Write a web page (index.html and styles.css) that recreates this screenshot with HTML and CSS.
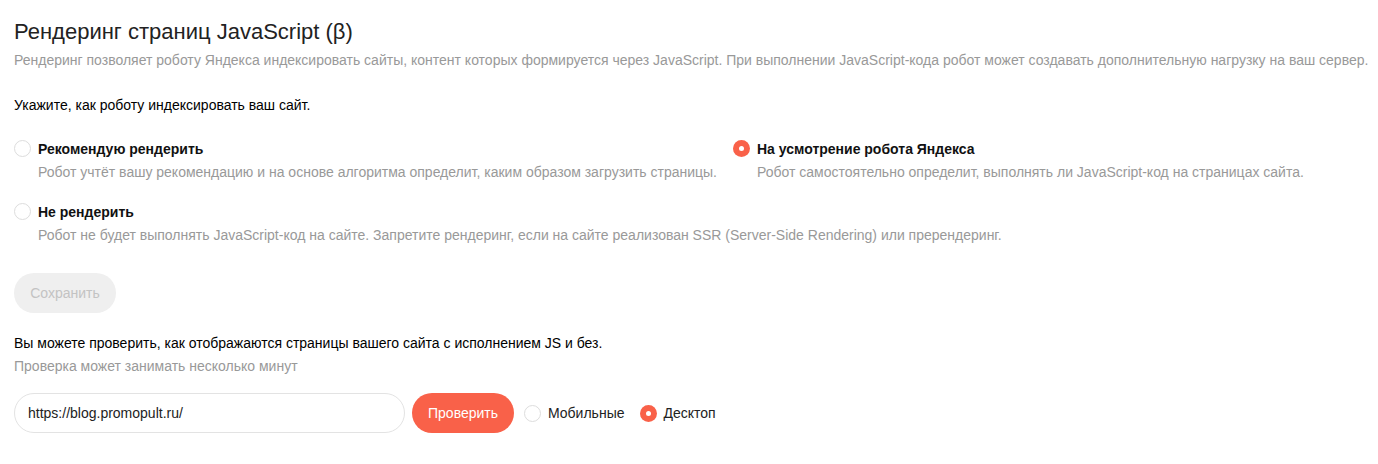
FILE: index.html
```html
<!DOCTYPE html>
<html>
    <head lang="ru">
        <meta charset="UTF-8">
        <title>Рендеринг</title>
        <link rel="stylesheet" href="styles.css">
    </head>
    <body>
    <div class="page">
        <h1 class="title">Рендеринг страниц JavaScript (β)</h1>
        <p class="lead">Рендеринг позволяет роботу Яндекса индексировать сайты, контент которых формируется через JavaScript. При выполнении JavaScript-кода робот может создавать дополнительную нагрузку на ваш сервер.</p>

        <p class="ask">Укажите, как роботу индексировать ваш сайт.</p>

        <div class="options">
            <div class="option">
                <span class="radio"></span>
                <div class="option-text">
                    <div class="option-name">Рекомендую рендерить</div>
                    <div class="option-desc">Робот учтёт вашу рекомендацию и на основе алгоритма определит, каким образом загрузить страницы.</div>
                </div>
            </div>
            <div class="option">
                <span class="radio checked"></span>
                <div class="option-text">
                    <div class="option-name">На усмотрение робота Яндекса</div>
                    <div class="option-desc">Робот самостоятельно определит, выполнять ли JavaScript-код на страницах сайта.</div>
                </div>
            </div>
            <div class="option wide">
                <span class="radio"></span>
                <div class="option-text">
                    <div class="option-name">Не рендерить</div>
                    <div class="option-desc">Робот не будет выполнять JavaScript-код на сайте. Запретите рендеринг, если на сайте реализован SSR (Server-Side Rendering) или пререндеринг.</div>
                </div>
            </div>
        </div>

        <button class="btn btn-disabled">Сохранить</button>

        <p class="check-text">Вы можете проверить, как отображаются страницы вашего сайта с исполнением JS и без.</p>
        <p class="hint">Проверка может занимать несколько минут</p>

        <div class="check-row">
            <div class="url-input">https://blog.promopult.ru/</div>
            <button class="btn btn-primary">Проверить</button>
            <label class="inline-radio"><span class="radio"></span>Мобильные</label>
            <label class="inline-radio"><span class="radio checked"></span>Десктоп</label>
        </div>
    </div>
    </body>
</html>
```

FILE: styles.css
```css
*{
    margin:0;
    padding:0;
    box-sizing:border-box;
}
body{
    font-family:"Liberation Sans", Arial, sans-serif;
    font-size:14px;
    color:#000;
    background:#fff;
}
.page{
    padding:19px 14px 0 14px;
}
.title{
    font-size:22px;
    font-weight:normal;
    line-height:26px;
    color:#222;
}
.lead{
    margin-top:6px;
    line-height:18px;
    color:#999;
    white-space:nowrap;
}
.ask{
    margin-top:27px;
    line-height:18px;
}
.options{
    display:grid;
    grid-template-columns:719px 1fr;
    row-gap:22px;
    margin-top:26px;
}
.option{
    display:flex;
    gap:7px;
}
.option.wide{
    grid-column:1 / 3;
}
.radio{
    display:block;
    flex:none;
    width:17px;
    height:17px;
    border:1px solid #ddd;
    border-radius:50%;
    background:#fff;
    position:relative;
}
.radio.checked{
    border:none;
    background:#f96149;
}
.radio.checked::after{
    content:"";
    position:absolute;
    left:6px;
    top:6px;
    width:5px;
    height:5px;
    border-radius:50%;
    background:#fff;
}
.option-name{
    font-weight:bold;
    line-height:18px;
    color:#111;
}
.option-desc{
    margin-top:5px;
    line-height:18px;
    color:#999;
}
.btn{
    height:40px;
    border:none;
    border-radius:20px;
    padding:0 16px;
    font-family:inherit;
    font-size:14px;
}
.btn-disabled{
    margin-top:29px;
    width:102px;
    background:#efefef;
    color:#c3c3c3;
}
.btn-primary{
    width:102px;
    background:#f96149;
    color:#fff;
}
.check-text{
    margin-top:21px;
    line-height:18px;
}
.hint{
    margin-top:5px;
    line-height:18px;
    color:#999;
}
.check-row{
    display:flex;
    align-items:center;
    margin-top:18px;
}
.url-input{
    width:391px;
    height:40px;
    border:1px solid #e3e3e3;
    border-radius:20px;
    padding:0 13px;
    line-height:38px;
    color:#222;
}
.check-row .btn-primary{
    margin-left:7px;
}
.inline-radio{
    display:flex;
    align-items:center;
    gap:7px;
    margin-left:10px;
    color:#222;
}
.inline-radio + .inline-radio{
    margin-left:15px;
}
```
